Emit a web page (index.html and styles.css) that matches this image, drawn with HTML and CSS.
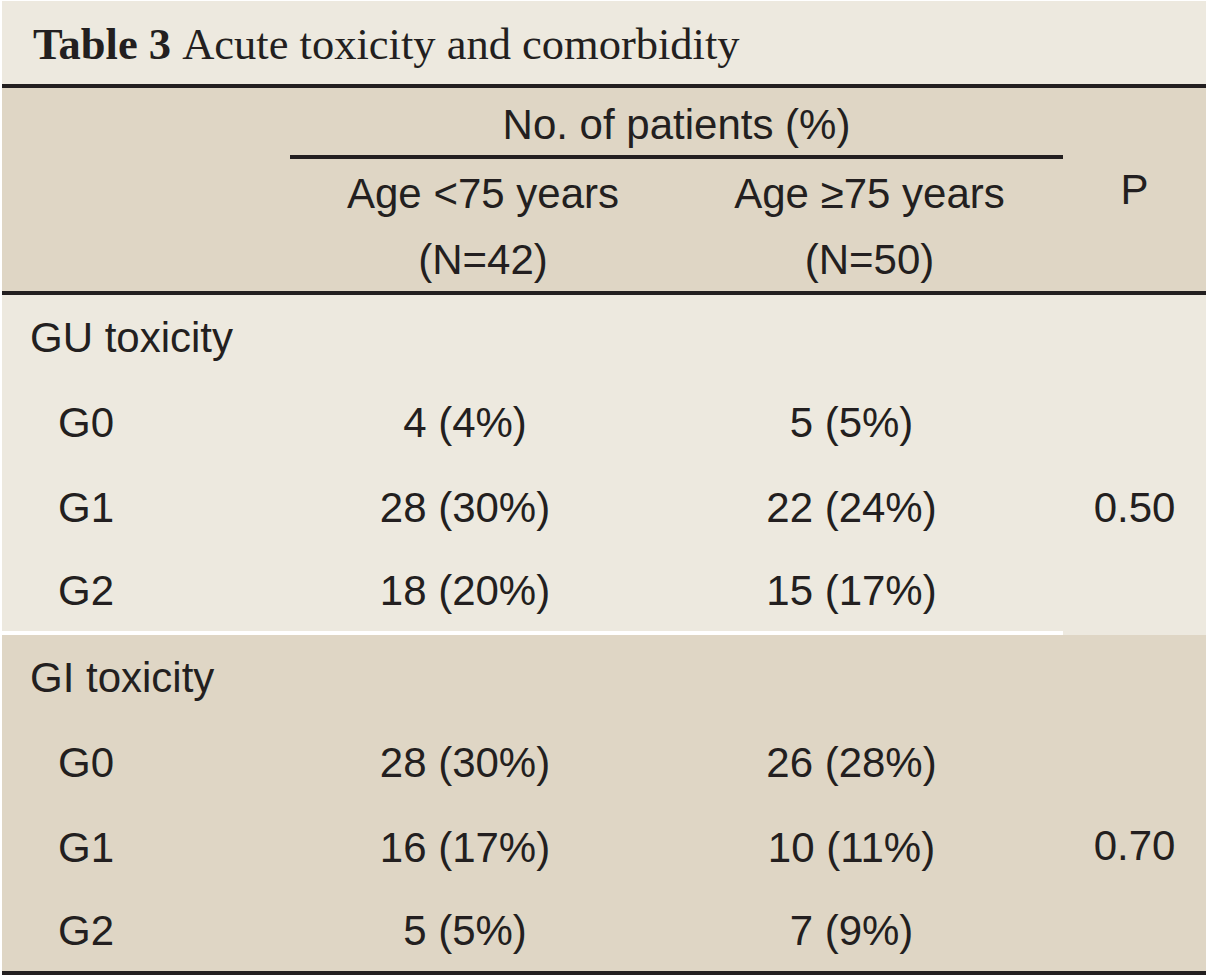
FILE: index.html
```html
<!DOCTYPE html>
<html lang="en">
<head>
<meta charset="utf-8">
<title>Table 3 Acute toxicity and comorbidity</title>
<link rel="stylesheet" href="styles.css">
</head>
<body>
<div class="table">
  <div class="title"><b>Table 3</b>&nbsp;Acute toxicity and comorbidity</div>
  <div class="rule"></div>
  <div class="head">
    <div class="cell group">No. of patients (%)</div>
    <div class="group-line"></div>
    <div class="cell c2 r3">Age &lt;75 years</div>
    <div class="cell c3 r3">Age ≥75 years</div>
    <div class="cell c2 r4">(N=42)</div>
    <div class="cell c3 r4">(N=50)</div>
    <div class="cell pcol">P</div>
  </div>
  <div class="rule"></div>
  <div class="section light">
    <div class="cell label">GU toxicity</div>
    <div class="cell sub">G0</div><div class="cell num">4 (4%)</div><div class="cell num">5 (5%)</div>
    <div class="cell pval">0.50</div>
    <div class="cell sub">G1</div><div class="cell num">28 (30%)</div><div class="cell num">22 (24%)</div>
    <div class="cell sub">G2</div><div class="cell num">18 (20%)</div><div class="cell num">15 (17%)</div>
    <div class="sep"></div>
  </div>
  <div class="section dark last">
    <div class="cell label">GI toxicity</div>
    <div class="cell sub">G0</div><div class="cell num">28 (30%)</div><div class="cell num">26 (28%)</div>
    <div class="cell pval">0.70</div>
    <div class="cell sub">G1</div><div class="cell num">16 (17%)</div><div class="cell num">10 (11%)</div>
    <div class="cell sub">G2</div><div class="cell num">5 (5%)</div><div class="cell num">7 (9%)</div>
  </div>
  <div class="rule"></div>
</div>
</body>
</html>
```

FILE: styles.css
```css
html, body {
  margin: 0;
  padding: 0;
  background: #ffffff;
}

body {
  font-family: "Liberation Sans", Arial, sans-serif;
  color: #231f20;
}

.table {
  width: 1204px;
  margin: 1px 2px 0 2px;
}

.title {
  height: 80px;
  padding: 3px 0 0 31px;
  background: #ede9df;
  display: flex;
  align-items: center;
  font-family: "Liberation Serif", "Times New Roman", serif;
  font-size: 44.5px;
  white-space: nowrap;
}

.title b {
  font-weight: bold;
}

.rule {
  height: 4px;
  background: #231f20;
}

.cell {
  display: flex;
  align-items: center;
  font-size: 42px;
  white-space: nowrap;
}

.head {
  display: grid;
  grid-template-columns: 288px 386px 387px 143px;
  grid-template-rows: 67px 4px 69px 63px;
  background: #dfd6c5;
}

.group {
  grid-column: 2 / 4;
  grid-row: 1;
  justify-content: center;
  padding-top: 6px;
}

.group-line {
  grid-column: 2 / 4;
  grid-row: 2;
  background: #231f20;
}

.c2 { grid-column: 2; justify-content: center; }
.c3 { grid-column: 3; justify-content: center; }
.r3 { grid-row: 3; }
.r4 { grid-row: 4; }

.pcol {
  grid-column: 4;
  grid-row: 1 / 5;
  justify-content: center;
}

.section {
  display: grid;
  grid-template-columns: 288px 386px 387px 143px;
}

.section.light {
  grid-template-rows: 85px 85px 85px 81px 4px;
  background: #ede9df;
}

.section.dark {
  grid-template-rows: 85px 85px 85px 81px;
  background: #dfd6c5;
}

.label {
  grid-column: 1 / 4;
  padding-left: 28px;
}

.sub {
  grid-column: 1;
  padding-left: 56px;
}

.num {
  justify-content: center;
  padding-right: 36px;
}

.pval {
  grid-column: 4;
  grid-row: 2 / 6;
  justify-content: center;
}

.section.dark .pval {
  grid-row: 2 / 5;
}

.sep {
  grid-column: 1 / 4;
  grid-row: 5;
  background: #ffffff;
}
```
